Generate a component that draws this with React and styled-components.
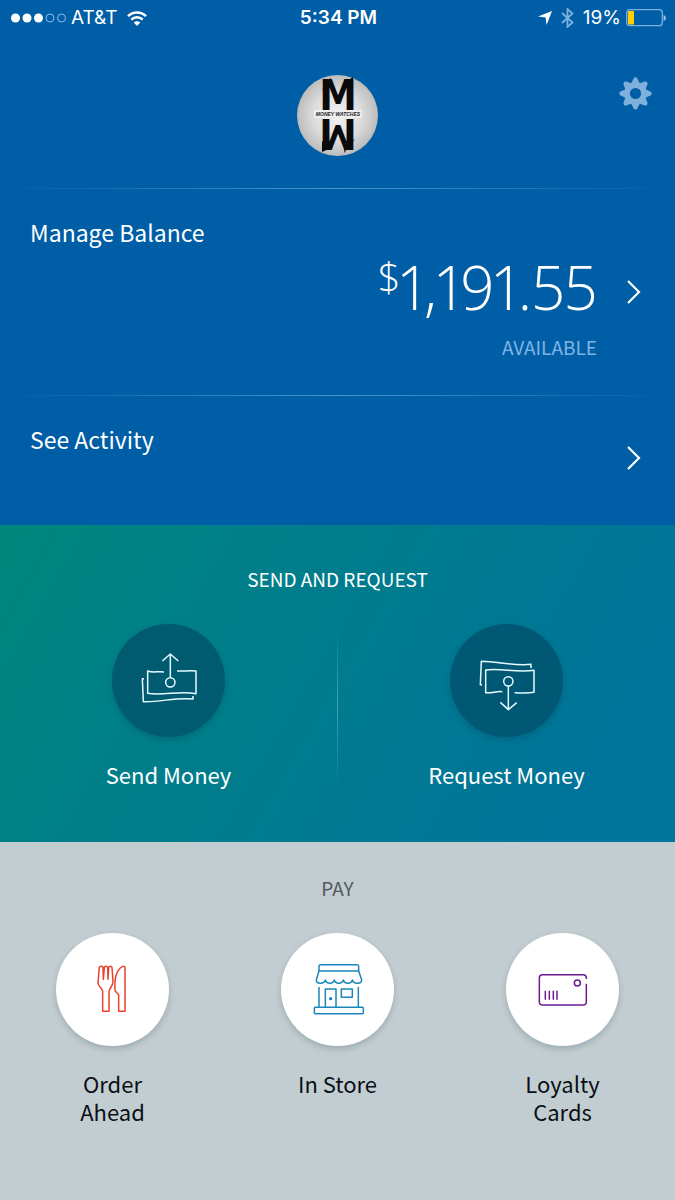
import React from "react";
import styled, { createGlobalStyle } from "styled-components";

const GlobalStyle = createGlobalStyle`
	* {
		box-sizing: border-box;
	}

	body {
		margin: 0;
		background: #c2cdd1;
		font-family: "Noto Sans CJK SC", "Open Sans", sans-serif;
	}

	button {
		padding: 0;
		border: 0;
		background: none;
		color: inherit;
		font: inherit;
		cursor: pointer;
	}

	svg {
		display: block;
		flex: none;
	}
`;

const Page = styled.main`
	display: flex;
	flex-direction: column;
	min-height: 100vh;
`;

const Account = styled.section`
	background: #005ea6;
	color: #fff;
`;

const StatusBar = styled.div`
	display: grid;
	grid-template-columns: 1fr auto 1fr;
	align-items: center;
	height: 36px;
	padding: 0 9px 0 11px;
	font-family: Inter, sans-serif;
	font-size: 19px;
	line-height: 24px;
`;

const StatusGroup = styled.div`
	display: flex;
	align-items: center;
	justify-content: ${(props) => props.$align || "flex-start"};
	gap: ${(props) => props.$gap}px;
`;

const Clock = styled.time`
	font-weight: 600;
`;

const Header = styled.header`
	display: grid;
	grid-template-columns: 1fr auto 1fr;
	align-items: start;
	padding: 39px 23px 32px;
`;

const SettingsButton = styled.button`
	grid-column: 3;
	justify-self: end;
	margin-top: 2px;
`;

const AvatarButton = styled.button`
	grid-column: 2;
	border-radius: 50%;
`;

const Divider = styled.hr`
	height: 1px;
	margin: 0;
	border: 0;
	background: linear-gradient(
		to right,
		rgba(120, 185, 235, 0),
		rgba(120, 185, 235, 0.6) 50%,
		rgba(120, 185, 235, 0)
	);
`;

const RowLabel = styled.span`
	grid-column: 1 / -1;
	font-size: 23px;
	line-height: 32px;
`;

const BalanceRow = styled.button`
	display: grid;
	grid-template-columns: 1fr auto 14px;
	column-gap: 30px;
	align-items: center;
	width: 100%;
	padding: 27px 34px 36px 30px;
	text-align: left;
`;

const ActivityRow = styled.button`
	display: flex;
	align-items: center;
	justify-content: space-between;
	width: 100%;
	min-height: 129px;
	padding: 27px 34px 32px 30px;

	${RowLabel} {
		align-self: flex-start;
	}
`;

const Amount = styled.span`
	grid-column: 2;
	display: flex;
	align-items: flex-start;
	justify-content: flex-end;
	margin: 7px 0 16px;
	font-family: "Open Sans", sans-serif;
	font-size: 60px;
	font-variant-numeric: proportional-nums;
	font-weight: 300;
	line-height: 64px;
`;

const Currency = styled.span`
	font-size: 40px;
	line-height: 44px;
`;

const Available = styled.span`
	grid-column: 2;
	color: #7db4e4;
	font-size: 19px;
	line-height: 24px;
	text-align: right;
`;

const Transfer = styled.section`
	padding: 42px 0 54px;
	background: linear-gradient(120deg, #00877a, #008088 25%, #007a90 55%, #00749a 85%);
	color: #fff;
`;

const SectionTitle = styled.h2`
	margin: 0;
	color: ${(props) => props.$color || "inherit"};
	font-size: 19px;
	font-weight: 400;
	line-height: 24px;
	text-align: center;
`;

const TransferGrid = styled.div`
	display: grid;
	grid-template-columns: 1fr 1px 1fr;
	margin-top: 33px;
`;

const Separator = styled.div`
	background: linear-gradient(
		to bottom,
		rgba(130, 205, 215, 0),
		rgba(130, 205, 215, 0.5),
		rgba(130, 205, 215, 0)
	);
`;

const Action = styled.button`
	display: flex;
	flex-direction: column;
	align-items: center;
	gap: 23px;
	font-size: 22px;
	line-height: 28px;
`;

const IconCircle = styled.span`
	display: flex;
	align-items: center;
	justify-content: center;
	width: 113px;
	height: 113px;
	border-radius: 50%;
	background: ${(props) => props.$background};
	color: ${(props) => props.$color};
	box-shadow: 0 3px 6px rgba(0, 40, 60, 0.2);
`;

const ActionLabel = styled.span`
	max-width: ${(props) => (props.$wrap ? "100px" : "none")};
	text-align: center;
`;

const Pay = styled.section`
	flex: 1;
	padding: 34px 0 48px;
	background: #c2cdd1;
	color: #0b0f14;
`;

const PayGrid = styled.div`
	display: grid;
	grid-template-columns: repeat(3, 1fr);
	align-items: start;
	margin-top: 33px;
`;

const Chevron = () => (
	<svg width="14" height="24" viewBox="0 0 14 24" fill="none" stroke="#fff" strokeWidth="2.2">
		<path d="M1 1 L12 12 L1 23" />
	</svg>
);

const Signal = () => (
	<svg width="56" height="10" viewBox="0 0 56 10" fill="#fff">
		<circle cx="4.5" cy="5" r="4.5" />
		<circle cx="16" cy="5" r="4.5" />
		<circle cx="27.5" cy="5" r="4.5" />
		<circle cx="39" cy="5" r="4" fill="none" stroke="#8dbce6" />
		<circle cx="50.5" cy="5" r="4" fill="none" stroke="#8dbce6" />
	</svg>
);

const Wifi = () => (
	<svg width="20" height="15" viewBox="0 0 20 15" fill="none" stroke="#fff" strokeWidth="2.4">
		<path d="M1 5.2 C6 0.2 14 0.2 19 5.2" />
		<path d="M4.3 8.6 C7.5 5.4 12.5 5.4 15.7 8.6" />
		<path d="M10 15 L6.7 11.6 C8.6 9.8 11.4 9.8 13.3 11.6 Z" fill="#fff" stroke="none" />
	</svg>
);

const LocationArrow = () => (
	<svg width="14" height="14" viewBox="0 0 14 14" fill="#fff">
		<path d="M14 0 L8.6 14 L7.6 6.6 L0 5.6 Z" />
	</svg>
);

const Bluetooth = () => (
	<svg width="13" height="20" viewBox="0 0 13 20" fill="none" stroke="#7db0de" strokeWidth="1.8">
		<path d="M1 5 L11.5 14.5 L6.5 19 V1 L11.5 5.5 L1 15" />
	</svg>
);

const Battery = () => (
	<svg width="40" height="18" viewBox="0 0 40 18">
		<rect x="0.7" y="0.7" width="35.6" height="16" rx="3" fill="none" stroke="#7db0de" strokeWidth="1.3" />
		<path d="M3 2 H8 V15.5 H3 Q2 15.5 2 14.5 V3 Q2 2 3 2 Z" fill="#ffcc00" />
		<path d="M37.6 6 Q40 7 40 9 Q40 11 37.6 12 Z" fill="#9cc5ea" />
	</svg>
);

const teeth = [0, 45, 90, 135, 180, 225, 270, 315];

const Gear = () => (
	<svg width="33" height="33" viewBox="-50 -50 100 100" fill="#7fb0dc">
		<circle r="25.5" fill="none" stroke="#7fb0dc" strokeWidth="17" />
		{teeth.map((angle) => (
			<path
				key={angle}
				d="M-13 -30 L-6 -45 Q-4 -49 0 -49 Q4 -49 6 -45 L13 -30 Z"
				transform={`rotate(${angle})`}
			/>
		))}
	</svg>
);

const AvatarSvg = styled.svg`
	overflow: visible;
`;

const Avatar = () => (
	<AvatarSvg width="81" height="81" viewBox="0 0 81 81">
		<defs>
			<radialGradient id="avatarShade">
				<stop offset="0" stopColor="#f2f2f2" />
				<stop offset="0.6" stopColor="#dcdcdc" />
				<stop offset="1" stopColor="#bcbcbc" />
			</radialGradient>
		</defs>
		<circle cx="40.5" cy="40.5" r="40.5" fill="url(#avatarShade)" />
		<g
			fill="#0a0a0a"
			fontFamily="'Liberation Sans Narrow', 'DejaVu Sans Condensed', sans-serif"
			fontSize="42"
			fontWeight="700"
			textAnchor="middle"
		>
			<text x="41" y="35">M</text>
			<text x="-41" y="-44" transform="rotate(180)">M</text>
		</g>
		<path d="M25 15 L34 2 L31 12 Z M47 8 L56 2 V12 Z M25 66 V77 L34 73 Z M48 72 L58 64 L47 78 Z" fill="#0a0a0a" />
		<rect x="17" y="35" width="48" height="8" fill="#eeeeee" />
		<text
			x="41"
			y="41"
			fontFamily="'Liberation Sans', sans-serif"
			fontSize="5"
			fontStyle="italic"
			fontWeight="700"
			textAnchor="middle"
			fill="#222"
		>
			MONEY WATCHES
		</text>
	</AvatarSvg>
);

// Action icons share one grid: origin in the middle, three units to a pixel.
const ActionIcon = ({ children }) => (
	<svg
		width="64"
		height="64"
		viewBox="-96 -96 192 192"
		fill="none"
		stroke="currentColor"
		strokeWidth="4.5"
		strokeLinejoin="round"
	>
		{children}
	</svg>
);

const SendIcon = () => (
	<ActionIcon>
		<path d="M-15 -27 C-32 -30 -47 -24 -64 -30 V37 C-17 45 33 28 81 38 V-30 C61 -32 43 -29 24 -30" />
		<path d="M-75 -7 H-80 L-77 62 C-27 64 23 48 72 54 V45" />
		<circle cx="4" cy="4" r="14" />
		<path d="M4 -10 V-80 M-20 -60 L4 -81 L28 -60" />
	</ActionIcon>
);

const RequestIcon = () => (
	<ActionIcon>
		<path d="M-75 11 H-80 L-77 -59 C-29 -59 20 -44 72 -50 V-39" />
		<path d="M-14 32 C-34 30 -44 37 -64 35 V-33 C-19 -40 31 -23 81 -32 V34 C61 37 41 36 23 35" />
		<circle cx="4" cy="1" r="14" />
		<path d="M4 15 V85 M-20 64 L4 86 L29 65" />
	</ActionIcon>
);

const OrderIcon = () => (
	<ActionIcon>
		<path d="M-45 -22 L-41 -68 Q-35 -74 -30 -68 L-29 -32 L-26 -68 Q-22 -74 -16 -68 L-15 -32 L-13 -68 Q-7 -74 -3 -68 L0 -26 C0 -10 -11 -6 -12 4 V64 H-31 V4 C-32 -6 -45 -10 -45 -22 Z" />
		<path d="M36 -66 V64 H17 V14 L6 2 C4 -30 10 -60 28 -70 Q36 -73 36 -66 Z" />
	</ActionIcon>
);

const StoreIcon = () => (
	<ActionIcon>
		<path d="M-57 -57 V-71 Q-57 -76 -52 -76 H57 Q62 -76 62 -71 V-57 Z" />
		<path d="M-57 -57 L-65 -31 C-65 -17 -42 -17 -38 -30 C-34 -17 -15 -17 -11 -30 C-7 -17 12 -17 16 -30 C20 -17 39 -17 43 -30 C47 -17 71 -17 71 -31 L62 -57" />
		<path d="M-57 -9 V52 M61 -9 V52 M-38 52 V-3 H-6 V52" />
		<rect x="10" y="-3" width="33" height="25" />
		<rect x="-71" y="52" width="147" height="19" rx="3" />
		<circle cx="-22" cy="26" r="5" fill="currentColor" stroke="none" />
	</ActionIcon>
);

const CardIcon = () => (
	<ActionIcon>
		<path d="M70 -33 V-36 Q70 -46 60 -46 H-61 Q-71 -46 -71 -36 V35 Q-71 45 -61 45 H60 Q70 45 70 35 V-19" />
		<circle cx="43" cy="-21" r="9" />
		<path d="M-53 2 V29 M-41 2 V29 M-29 2 V29 M-18 2 V29" />
	</ActionIcon>
);

const payOptions = [
	{ label: "Order Ahead", color: "#e8432f", Icon: OrderIcon },
	{ label: "In Store", color: "#1a86bb", Icon: StoreIcon },
	{ label: "Loyalty Cards", color: "#6a1b8f", Icon: CardIcon },
];

const App = () => {
	return (
		<React.Fragment>
			<GlobalStyle />
			<Page>
				<Account>
					<StatusBar>
						<StatusGroup $gap={9}>
							<StatusGroup $gap={4}>
								<Signal />
								<span>AT&amp;T</span>
							</StatusGroup>
							<Wifi />
						</StatusGroup>
						<Clock>5:34 PM</Clock>
						<StatusGroup $gap={9} $align="flex-end">
							<LocationArrow />
							<Bluetooth />
							<StatusGroup $gap={5}>
								<span>19%</span>
								<Battery />
							</StatusGroup>
						</StatusGroup>
					</StatusBar>
					<Header>
						<AvatarButton type="button" aria-label="Profile">
							<Avatar />
						</AvatarButton>
						<SettingsButton type="button" aria-label="Settings">
							<Gear />
						</SettingsButton>
					</Header>
					<Divider />
					<BalanceRow type="button">
						<RowLabel>Manage Balance</RowLabel>
						<Amount>
							<Currency>$</Currency>
							1,191.55
						</Amount>
						<Chevron />
						<Available>AVAILABLE</Available>
					</BalanceRow>
					<Divider />
					<ActivityRow type="button">
						<RowLabel>See Activity</RowLabel>
						<Chevron />
					</ActivityRow>
				</Account>

				<Transfer>
					<SectionTitle>SEND AND REQUEST</SectionTitle>
					<TransferGrid>
						<Action type="button">
							<IconCircle $background="#005b70" $color="#e6fbff">
								<SendIcon />
							</IconCircle>
							<ActionLabel>Send Money</ActionLabel>
						</Action>
						<Separator />
						<Action type="button">
							<IconCircle $background="#005875" $color="#e6fbff">
								<RequestIcon />
							</IconCircle>
							<ActionLabel>Request Money</ActionLabel>
						</Action>
					</TransferGrid>
				</Transfer>

				<Pay>
					<SectionTitle $color="#55595e">PAY</SectionTitle>
					<PayGrid>
						{payOptions.map(({ label, color, Icon }) => (
							<Action type="button" key={label}>
								<IconCircle $background="#fff" $color={color}>
									<Icon />
								</IconCircle>
								<ActionLabel $wrap>{label}</ActionLabel>
							</Action>
						))}
					</PayGrid>
				</Pay>
			</Page>
		</React.Fragment>
	);
};

export default App;
